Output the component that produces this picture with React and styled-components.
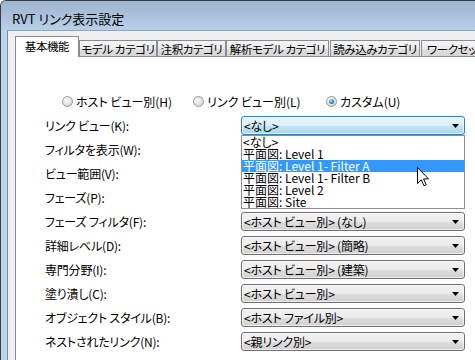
import React from 'react';
import styled, { createGlobalStyle } from 'styled-components';

const FONT = `"Noto Sans CJK JP", "Noto Sans", sans-serif`;

const GlobalStyle = createGlobalStyle`
  html, body { margin: 0; padding: 0; overflow: hidden; background: #ffffff; }
  body { font-family: ${FONT}; }
`;

const Window = styled.div`
  width: 475px;
  height: 360px;
  overflow: hidden;
  box-sizing: border-box;
  border-top: 1px solid #3a3f47;
  border-left: 1px solid #3a3f47;
  border-top-left-radius: 6px;
  background: #bcd3eb;
  display: flex;
  flex-direction: column;
  font-family: ${FONT};
  font-feature-settings: "palt";
  color: #000;
`;

const TitleBar = styled.div`
  height: 29px;
  flex: none;
  box-sizing: border-box;
  background: linear-gradient(#9cb4ce, #b8cfe8);
  display: flex;
  align-items: center;
  padding: 5px 0 0 11px;
  font-size: 13px;
  white-space: nowrap;
`;

const Frame = styled.div`
  flex: 1;
  display: flex;
  padding-left: 6px;
  min-height: 0;
`;

const Client = styled.div`
  flex: 1;
  min-width: 0;
  overflow: hidden;
  background: #f0f0f0;
  border-left: 1px solid #7d8ea3;
  border-top: 1px solid #8fa6c0;
  padding: 5px 0 0 7px;
  display: flex;
  flex-direction: column;
`;

const TabStrip = styled.div`
  display: flex;
  align-items: flex-end;
  height: 20px;
  flex: none;
  position: relative;
  z-index: 2;
`;

const Tab = styled.div`
  box-sizing: border-box;
  flex: none;
  width: ${(p) => p.$w}px;
  margin-left: ${(p) => p.$gap || 0}px;
  height: ${(p) => (p.$active ? 21 : 16)}px;
  margin-bottom: ${(p) => (p.$active ? -1 : 0)}px;
  border: 1px solid #898c95;
  border-bottom: none;
  background: ${(p) =>
    p.$active
      ? '#ffffff'
      : 'linear-gradient(#f4f4f4 0%, #ececec 50%, #e0e0e0 51%, #d6d6d6 100%)'};
  display: flex;
  align-items: center;
  justify-content: ${(p) => (p.$left ? 'flex-start' : 'center')};
  padding: 0 0 ${(p) => (p.$active ? 3 : 0)}px ${(p) => (p.$left ? 5 : 0)}px;
  font-size: 11.5px;
  letter-spacing: -0.4px;
  line-height: 14px;
  white-space: nowrap;
  overflow: hidden;
`;

const Panel = styled.div`
  flex: none;
  width: 540px;
  height: 320px;
  box-sizing: border-box;
  background: #ffffff;
  border: 1px solid #898c95;
  padding: 34px 0 0 29px;
`;

const RadioRow = styled.div`
  display: flex;
  align-items: center;
  height: 20px;
  margin-left: 17px;
`;

const RadioItem = styled.label`
  flex: none;
  width: ${(p) => p.$w}px;
  display: flex;
  align-items: center;
  gap: 3px;
  font-size: 12px;
  white-space: nowrap;
`;

const RadioCircle = styled.span`
  width: 11px;
  height: 11px;
  box-sizing: border-box;
  border-radius: 50%;
  border: 1px solid #979797;
  background: radial-gradient(circle at 35% 35%, #ffffff 0%, #e6e6e6 45%, #cfcfcf 100%);
  position: relative;
  flex: none;
  &::after {
    content: '';
    display: ${(p) => (p.$checked ? 'block' : 'none')};
    position: absolute;
    inset: 2px;
    border-radius: 50%;
    background: radial-gradient(circle at 40% 35%, #b9ecff 0%, #3a95d8 45%, #104f8c 100%);
  }
`;

const FormGrid = styled.div`
  margin-top: 5px;
  display: grid;
  grid-template-columns: 196px 224px;
  grid-auto-rows: 19px;
  row-gap: 5px;
  align-items: center;
`;

const Label = styled.div`
  font-size: 12px;
  letter-spacing: -0.2px;
  white-space: nowrap;
`;

const DropCell = styled.div`
  position: relative;
  height: 19px;
`;

const Combo = styled.div`
  box-sizing: border-box;
  height: 19px;
  border: 1px solid ${(p) => (p.$active ? '#3c7fb1' : '#707070')};
  border-radius: 3px;
  background: ${(p) =>
    p.$active
      ? 'linear-gradient(#eaf6fd 0%, #d9f0fc 50%, #bee6fd 51%, #a7d9f5 100%)'
      : 'linear-gradient(#f2f2f2 0%, #ebebeb 50%, #dddddd 51%, #d2d2d2 100%)'};
  box-shadow: inset 0 0 0 1px rgba(255, 255, 255, 0.6);
  display: flex;
  align-items: center;
  justify-content: space-between;
  padding: 0 5px 0 2px;
  font-size: 12px;
  letter-spacing: -0.2px;
  white-space: nowrap;
`;

const DropList = styled.div`
  position: absolute;
  top: 19px;
  left: 0;
  width: 224px;
  box-sizing: border-box;
  border: 1px solid #8a8f99;
  background: #ffffff;
  z-index: 5;
`;

const ListItem = styled.div`
  height: 12px;
  line-height: 12px;
  font-size: 12px;
  padding-left: 1px;
  white-space: nowrap;
  background: ${(p) => (p.$selected ? '#3399ff' : 'transparent')};
  color: ${(p) => (p.$selected ? '#ffffff' : '#000000')};
`;

const Cursor = styled.svg`
  position: absolute;
  left: 175px;
  top: 31px;
  z-index: 6;
`;

const Arrow = () => (
  <svg width="7" height="4" viewBox="0 0 7 4">
    <polygon points="0,0 7,0 3.5,4" fill="#000" />
  </svg>
);

const tabs = [
  { t: '基本機能', w: 64, active: true },
  { t: 'モデル カテゴリ', w: 78 },
  { t: '注釈カテゴリ', w: 69 },
  { t: '解析モデル カテゴリ', w: 103 },
  { t: '読み込みカテゴリ', w: 90, gap: 1 },
  { t: 'ワークセット', w: 80, gap: 1, left: true },
];

const rows = [
  ['リンク ビュー(K):', '<なし>'],
  ['フィルタを表示(W):', ''],
  ['ビュー範囲(V):', ''],
  ['フェーズ(P):', ''],
  ['フェーズ フィルタ(F):', '<ホスト ビュー別> (なし)'],
  ['詳細レベル(D):', '<ホスト ビュー別> (簡略)'],
  ['専門分野(I):', '<ホスト ビュー別> (建築)'],
  ['塗り潰し(C):', '<ホスト ビュー別>'],
  ['オブジェクト スタイル(B):', '<ホスト ファイル別>'],
  ['ネストされたリンク(N):', '<親リンク別>'],
];

const listItems = [
  '<なし>',
  '平面図: Level 1',
  '平面図: Level 1- Filter A',
  '平面図: Level 1- Filter B',
  '平面図: Level 2',
  '平面図: Site',
];

export default function App() {
  return (
    <>
      <GlobalStyle />
      <Window>
        <TitleBar>RVT リンク表示設定</TitleBar>
        <Frame>
          <Client>
            <TabStrip>
              {tabs.map((tb) => (
                <Tab key={tb.t} $w={tb.w} $active={tb.active} $gap={tb.gap} $left={tb.left}>
                  {tb.t}
                </Tab>
              ))}
            </TabStrip>
            <Panel>
              <RadioRow>
                <RadioItem $w={131}>
                  <RadioCircle />
                  ホスト ビュー別(H)
                </RadioItem>
                <RadioItem $w={133}>
                  <RadioCircle />
                  リンク ビュー別(L)
                </RadioItem>
                <RadioItem $w={120}>
                  <RadioCircle $checked />
                  カスタム(U)
                </RadioItem>
              </RadioRow>
              <FormGrid>
                {rows.map(([label, value], i) => (
                  <React.Fragment key={label}>
                    <Label>{label}</Label>
                    <DropCell>
                      <Combo $active={i === 0}>
                        <span>{value}</span>
                        <Arrow />
                      </Combo>
                      {i === 0 && (
                        <DropList>
                          {listItems.map((it, j) => (
                            <ListItem key={it} $selected={j === 2}>
                              {it}
                            </ListItem>
                          ))}
                          <Cursor width="12" height="20" viewBox="0 0 12 20">
                            <path
                              d="M0.5 0.5 L0.5 16.5 L4.3 12.8 L7 18.8 L9.2 17.8 L6.6 11.9 L11.5 11.9 Z"
                              fill="#ffffff"
                              stroke="#000000"
                              strokeWidth="1"
                              strokeLinejoin="miter"
                            />
                          </Cursor>
                        </DropList>
                      )}
                    </DropCell>
                  </React.Fragment>
                ))}
              </FormGrid>
            </Panel>
          </Client>
        </Frame>
      </Window>
    </>
  );
}
